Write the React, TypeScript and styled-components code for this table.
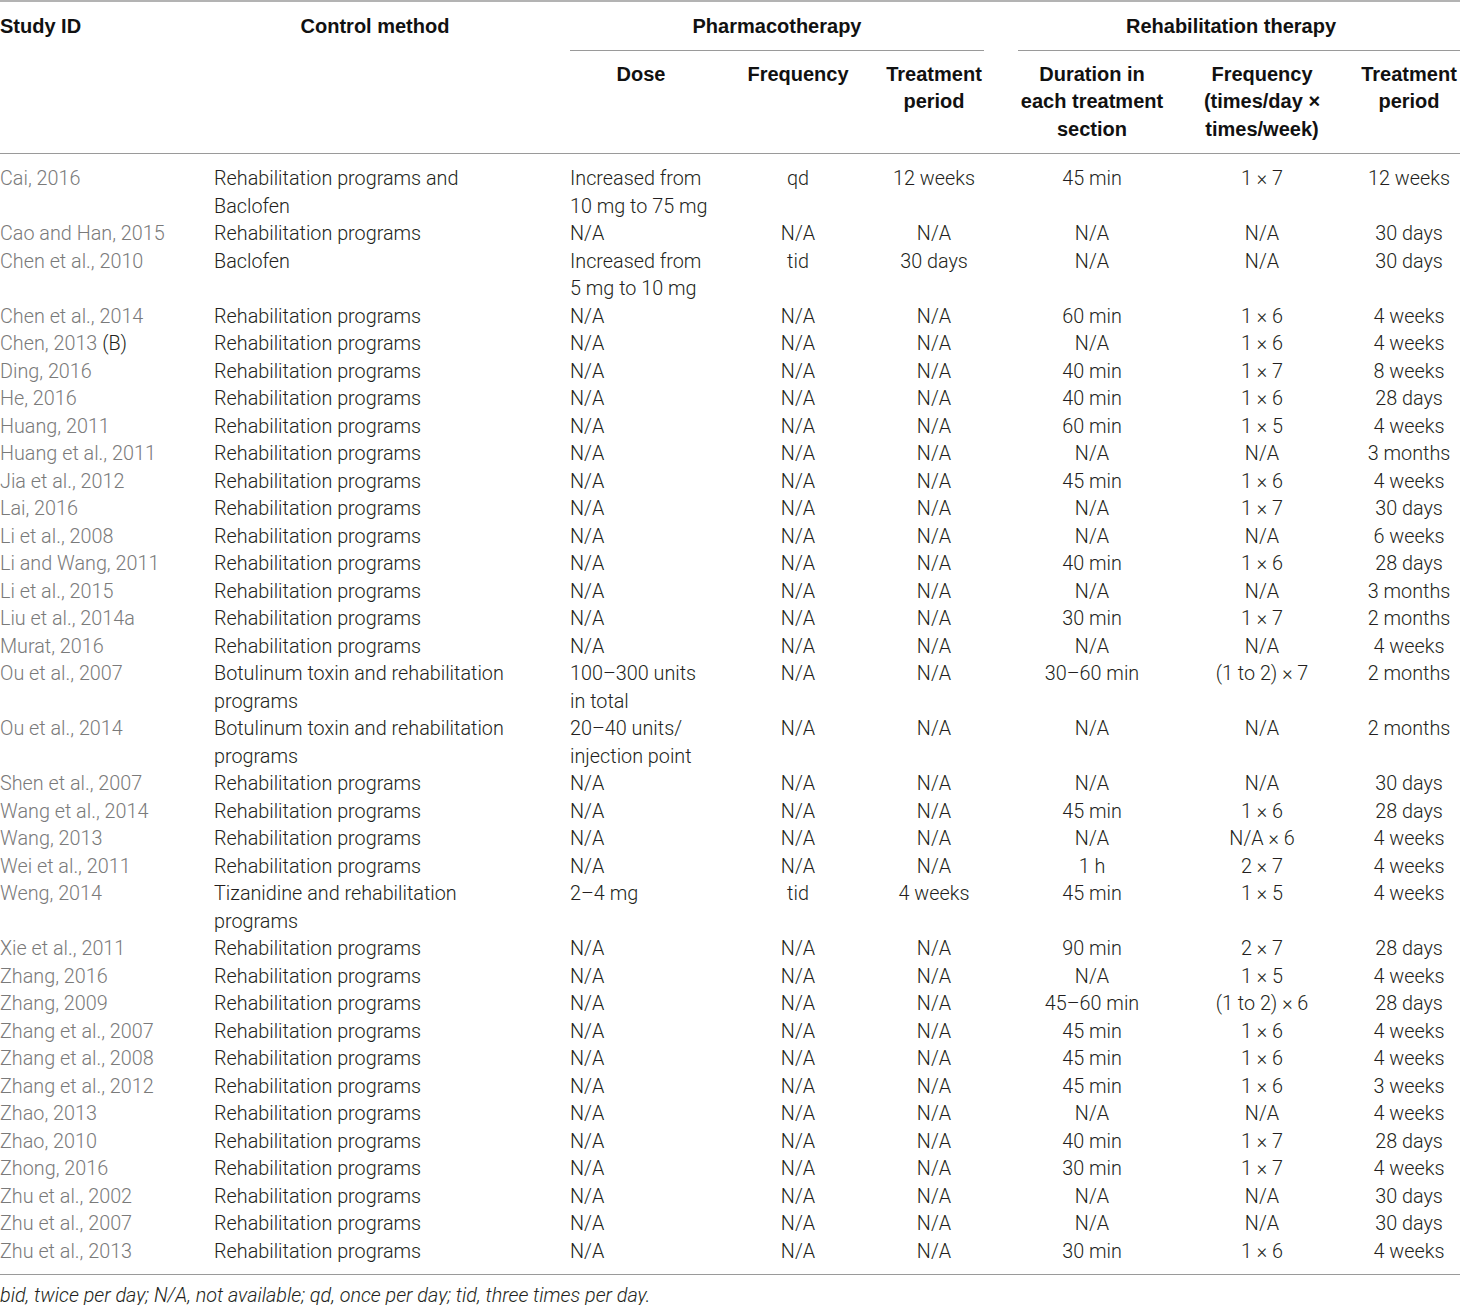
import React from "react";
import styled, { createGlobalStyle } from "styled-components";

const Global = createGlobalStyle`
  html, body { margin: 0; padding: 0; background: #fff; }
  body { font-family: Roboto, "Liberation Sans", Arial, sans-serif; }
`;

const COLS = "180px 322px 142px 104px 100px 148px 124px 102px";

const Page = styled.div`
  width: 1460px;
  font-family: Roboto, "Liberation Sans", Arial, sans-serif;
  font-size: 19.8px;
  font-weight: 300;
  line-height: 27.5px;
  color: #231f20;
`;

const Table = styled.div`
  border-top: 2px solid #b3b3b3;
  border-bottom: 1px solid #9a9a9a;
`;

const Head = styled.div`
  display: grid;
  grid-template-columns: ${COLS};
  column-gap: 34px;
  border-bottom: 1px solid #9a9a9a;
  font-family: "Liberation Sans", Arial, sans-serif;
  font-size: 20px;
  font-weight: 700;
  color: #111;
`;

const HeadCell = styled.div<{ $span?: number; $align?: string; $rows?: number; $underline?: boolean; $shift?: number }>`
  grid-column: span ${(p) => p.$span ?? 1};
  grid-row: span ${(p) => p.$rows ?? 1};
  text-align: ${(p) => p.$align ?? "center"};
  padding: ${(p) => (p.$underline ? "11px 0 9px" : p.$rows ? "11px 0 0" : "10px 0 10px")};
  padding-right: ${(p) => p.$shift ?? 0}px;
  border-bottom: ${(p) => (p.$underline ? "1px solid #9a9a9a" : "none")};
  align-self: start;
`;

const Body = styled.div`
  padding: 11px 0 9px;
`;

const Row = styled.div`
  display: grid;
  grid-template-columns: ${COLS};
  column-gap: 34px;
`;

const Cell = styled.div<{ $align?: string; $muted?: boolean }>`
  text-align: ${(p) => p.$align ?? "left"};
  color: ${(p) => (p.$muted ? "#7a7a7a" : "#231f20")};
`;

const Dark = styled.span`
  color: #231f20;
`;

const Foot = styled.div`
  font-style: italic;
  line-height: 27.5px;
  padding-top: 7px;
  color: #231f20;
`;

type R = [React.ReactNode, string, string, string, string, string, string, string];

const rows: R[] = [
  ["Cai, 2016", "Rehabilitation programs and Baclofen", "Increased from 10 mg to 75 mg", "qd", "12 weeks", "45 min", "1 × 7", "12 weeks"],
  ["Cao and Han, 2015", "Rehabilitation programs", "N/A", "N/A", "N/A", "N/A", "N/A", "30 days"],
  ["Chen et al., 2010", "Baclofen", "Increased from 5 mg to 10 mg", "tid", "30 days", "N/A", "N/A", "30 days"],
  ["Chen et al., 2014", "Rehabilitation programs", "N/A", "N/A", "N/A", "60 min", "1 × 6", "4 weeks"],
  [<>Chen, 2013 <Dark>(B)</Dark></>, "Rehabilitation programs", "N/A", "N/A", "N/A", "N/A", "1 × 6", "4 weeks"],
  ["Ding, 2016", "Rehabilitation programs", "N/A", "N/A", "N/A", "40 min", "1 × 7", "8 weeks"],
  ["He, 2016", "Rehabilitation programs", "N/A", "N/A", "N/A", "40 min", "1 × 6", "28 days"],
  ["Huang, 2011", "Rehabilitation programs", "N/A", "N/A", "N/A", "60 min", "1 × 5", "4 weeks"],
  ["Huang et al., 2011", "Rehabilitation programs", "N/A", "N/A", "N/A", "N/A", "N/A", "3 months"],
  ["Jia et al., 2012", "Rehabilitation programs", "N/A", "N/A", "N/A", "45 min", "1 × 6", "4 weeks"],
  ["Lai, 2016", "Rehabilitation programs", "N/A", "N/A", "N/A", "N/A", "1 × 7", "30 days"],
  ["Li et al., 2008", "Rehabilitation programs", "N/A", "N/A", "N/A", "N/A", "N/A", "6 weeks"],
  ["Li and Wang, 2011", "Rehabilitation programs", "N/A", "N/A", "N/A", "40 min", "1 × 6", "28 days"],
  ["Li et al., 2015", "Rehabilitation programs", "N/A", "N/A", "N/A", "N/A", "N/A", "3 months"],
  ["Liu et al., 2014a", "Rehabilitation programs", "N/A", "N/A", "N/A", "30 min", "1 × 7", "2 months"],
  ["Murat, 2016", "Rehabilitation programs", "N/A", "N/A", "N/A", "N/A", "N/A", "4 weeks"],
  ["Ou et al., 2007", "Botulinum toxin and rehabilitation programs", "100–300 units in total", "N/A", "N/A", "30–60 min", "(1 to 2) × 7", "2 months"],
  ["Ou et al., 2014", "Botulinum toxin and rehabilitation programs", "20–40 units/ injection point", "N/A", "N/A", "N/A", "N/A", "2 months"],
  ["Shen et al., 2007", "Rehabilitation programs", "N/A", "N/A", "N/A", "N/A", "N/A", "30 days"],
  ["Wang et al., 2014", "Rehabilitation programs", "N/A", "N/A", "N/A", "45 min", "1 × 6", "28 days"],
  ["Wang, 2013", "Rehabilitation programs", "N/A", "N/A", "N/A", "N/A", "N/A × 6", "4 weeks"],
  ["Wei et al., 2011", "Rehabilitation programs", "N/A", "N/A", "N/A", "1 h", "2 × 7", "4 weeks"],
  ["Weng, 2014", "Tizanidine and rehabilitation programs", "2–4 mg", "tid", "4 weeks", "45 min", "1 × 5", "4 weeks"],
  ["Xie et al., 2011", "Rehabilitation programs", "N/A", "N/A", "N/A", "90 min", "2 × 7", "28 days"],
  ["Zhang, 2016", "Rehabilitation programs", "N/A", "N/A", "N/A", "N/A", "1 × 5", "4 weeks"],
  ["Zhang, 2009", "Rehabilitation programs", "N/A", "N/A", "N/A", "45–60 min", "(1 to 2) × 6", "28 days"],
  ["Zhang et al., 2007", "Rehabilitation programs", "N/A", "N/A", "N/A", "45 min", "1 × 6", "4 weeks"],
  ["Zhang et al., 2008", "Rehabilitation programs", "N/A", "N/A", "N/A", "45 min", "1 × 6", "4 weeks"],
  ["Zhang et al., 2012", "Rehabilitation programs", "N/A", "N/A", "N/A", "45 min", "1 × 6", "3 weeks"],
  ["Zhao, 2013", "Rehabilitation programs", "N/A", "N/A", "N/A", "N/A", "N/A", "4 weeks"],
  ["Zhao, 2010", "Rehabilitation programs", "N/A", "N/A", "N/A", "40 min", "1 × 7", "28 days"],
  ["Zhong, 2016", "Rehabilitation programs", "N/A", "N/A", "N/A", "30 min", "1 × 7", "4 weeks"],
  ["Zhu et al., 2002", "Rehabilitation programs", "N/A", "N/A", "N/A", "N/A", "N/A", "30 days"],
  ["Zhu et al., 2007", "Rehabilitation programs", "N/A", "N/A", "N/A", "N/A", "N/A", "30 days"],
  ["Zhu et al., 2013", "Rehabilitation programs", "N/A", "N/A", "N/A", "30 min", "1 × 6", "4 weeks"],
];

export default function App() {
  return (
    <Page>
      <Global />
      <Table>
        <Head>
          <HeadCell $align="left" $rows={2}>Study ID</HeadCell>
          <HeadCell $rows={2}>Control method</HeadCell>
          <HeadCell $span={3} $underline>Pharmacotherapy</HeadCell>
          <HeadCell $span={3} $underline $shift={16}>Rehabilitation therapy</HeadCell>
          <HeadCell>Dose</HeadCell>
          <HeadCell>Frequency</HeadCell>
          <HeadCell>Treatment<br />period</HeadCell>
          <HeadCell>Duration in<br />each treatment<br />section</HeadCell>
          <HeadCell>Frequency<br />(times/day ×<br />times/week)</HeadCell>
          <HeadCell>Treatment<br />period</HeadCell>
        </Head>
        <Body>
          {rows.map((r, i) => (
            <Row key={i}>
              <Cell $muted>{r[0]}</Cell>
              <Cell>{r[1]}</Cell>
              <Cell>{r[2]}</Cell>
              <Cell $align="center">{r[3]}</Cell>
              <Cell $align="center">{r[4]}</Cell>
              <Cell $align="center">{r[5]}</Cell>
              <Cell $align="center">{r[6]}</Cell>
              <Cell $align="center">{r[7]}</Cell>
            </Row>
          ))}
        </Body>
      </Table>
      <Foot>bid, twice per day; N/A, not available; qd, once per day; tid, three times per day.</Foot>
    </Page>
  );
}
